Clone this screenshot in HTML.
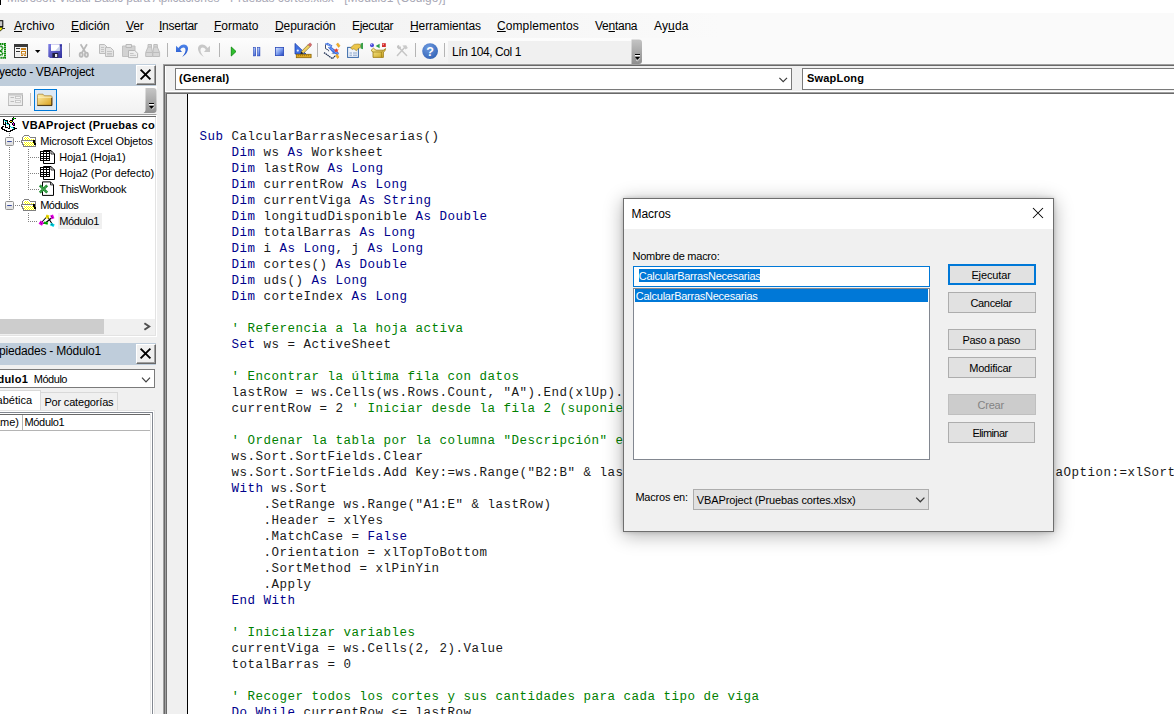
<!DOCTYPE html>
<html><head><meta charset="utf-8">
<style>
*{box-sizing:border-box;margin:0;padding:0}
html,body{width:1174px;height:714px;overflow:hidden;background:#fff}
body{font-family:"Liberation Sans",sans-serif;font-size:12px;color:#000;position:relative}
.abs{position:absolute}
.t{position:absolute;white-space:pre;line-height:1}
u{text-decoration:underline;text-underline-offset:1px}
/* title */
#title{left:0;top:0;width:1174px;height:13px;background:#fff;overflow:hidden}
#menubar{left:0;top:13px;width:1174px;height:25px;background:linear-gradient(to right,#f0f0f0 0,#f3f3f3 300px,#fafafa 720px,#fafafa)}
#toolbar{left:0;top:38px;width:1174px;height:26px;background:#fafafa}
#mdi{left:0;top:64px;width:1174px;height:650px;background:#f0f0f0}
.mi{position:absolute;top:19px;font-size:12px;line-height:14px;white-space:pre;color:#000}
/* code */
#code{left:188px;top:94px;width:986px;height:620px;background:#fff;overflow:hidden}
#code pre{position:absolute;left:11.4px;top:35.4px;font-family:"Liberation Mono",monospace;font-size:12.5px;letter-spacing:0.5px;line-height:16px;color:#1a1a1a;white-space:pre}
.k{color:#00008b}.c{color:#008000}
</style></head><body>
<div id="title" class="abs"></div>
<div id="menubar" class="abs"></div>
<div id="toolbar" class="abs"></div>
<div id="mdi" class="abs"></div>
<div class="t" style="left:0;top:-9.5px;left:7px;font-size:12px;color:#a9a9b6;line-height:14px;letter-spacing:-0.05px">Microsoft Visual Basic para Aplicaciones - Pruebas cortes.xlsx - [Módulo1 (Código)]</div>
<div class="abs" style="left:0;top:0;width:1px;height:5px;background:#000"></div>
<div class="mi" style="left:14px;letter-spacing:0.06px"><u>A</u>rchivo</div>
<div class="mi" style="left:71px;letter-spacing:-0.11px"><u>E</u>dición</div>
<div class="mi" style="left:126px;letter-spacing:-0.2px"><u>V</u>er</div>
<div class="mi" style="left:159px;letter-spacing:-0.26px"><u>I</u>nsertar</div>
<div class="mi" style="left:214px;letter-spacing:-0.04px"><u>F</u>ormato</div>
<div class="mi" style="left:275px;letter-spacing:-0.08px"><u>D</u>epuración</div>
<div class="mi" style="left:352px;letter-spacing:-0.35px">Ejecu<u>t</u>ar</div>
<div class="mi" style="left:410px;letter-spacing:-0.09px"><u>H</u>erramientas</div>
<div class="mi" style="left:497px;letter-spacing:0.09px"><u>C</u>omplementos</div>
<div class="mi" style="left:595px;letter-spacing:-0.26px">Ve<u>n</u>tana</div>
<div class="mi" style="left:654px;letter-spacing:0.14px">Ay<u>u</u>da</div>
<!--MENU-->
<div class="abs" style="left:0;top:38px;width:632px;height:26px;background:linear-gradient(#fdfdfd,#f9f9f9 40%,#f2f2f2)"></div>
<svg class="abs" style="left:0;top:18px" width="8" height="16" viewBox="0 18 8 16"><rect x="-2" y="20.7" width="4.8" height="6" fill="#c8c8c8" stroke="#000" stroke-width="1"/><path d="M-1 27.2 L2.4 27.2 L2.4 29 L0.6 30.8 L-1 30.8 Z" fill="#f4ee00" stroke="#000" stroke-width="0.8"/><path d="M3 28.5 H5" stroke="#000" stroke-width="0.8"/></svg>
<svg class="abs" style="left:0;top:38px" width="660" height="28" viewBox="0 38 660 28">
<defs>
<linearGradient id="gSave" x1="0" y1="0" x2="1" y2="1"><stop offset="0" stop-color="#7f7fe6"/><stop offset="1" stop-color="#2e2e9a"/></linearGradient>
<linearGradient id="gStop" x1="0" y1="0" x2="1" y2="1"><stop offset="0" stop-color="#dfe9ff"/><stop offset="0.5" stop-color="#7fa0ee"/><stop offset="1" stop-color="#1d3fbf"/></linearGradient>
<linearGradient id="gGrip" x1="0" y1="0" x2="0" y2="1"><stop offset="0" stop-color="#c4c4c4"/><stop offset="1" stop-color="#8e8e8e"/></linearGradient>
<linearGradient id="gBox" x1="0" y1="0" x2="1" y2="1"><stop offset="0" stop-color="#fff3a0"/><stop offset="1" stop-color="#c9a21a"/></linearGradient>
<radialGradient id="gHelp" cx="0.4" cy="0.3" r="0.8"><stop offset="0" stop-color="#6f9be0"/><stop offset="1" stop-color="#2f5fb3"/></radialGradient>
</defs>
<!-- excel icon partial -->
<rect x="-6" y="43.9" width="11" height="13.9" fill="#fff" stroke="#0a8a0a" stroke-width="2" stroke-dasharray="1.5 0.5"/>
<path d="M-1 46.6 Q2.6 45.6 2.6 48 Q2.6 50 -0.6 51.4 M-1 51 Q2.8 51.6 2.8 54.6 L-1 55" stroke="#0a8a0a" stroke-width="1.7" fill="none" stroke-dasharray="1.5 0.4"/>
<!-- userform -->
<rect x="14.5" y="44.5" width="13" height="13" fill="#f4f4f4" stroke="#3a3a3a" stroke-width="1"/>
<rect x="14" y="44" width="14" height="3" fill="#3a3a3a"/>
<rect x="16" y="48" width="4" height="1" fill="#333"/><rect x="16" y="51" width="4" height="1" fill="#333"/><rect x="16" y="53" width="4" height="3" fill="#ececec"/>
<rect x="21" y="48" width="5" height="2" fill="#c8801a"/>
<rect x="21.5" y="51.5" width="4" height="2.5" fill="#fff" stroke="#c8801a" stroke-width="1"/>
<rect x="21" y="55" width="2" height="1" fill="#c8801a"/><rect x="24" y="55" width="2" height="1" fill="#c8801a"/>
<path d="M35 50 H40.4 L37.7 53 Z" fill="#000"/>
<!-- save -->
<path d="M48.3 44 H62 V58 H50 L48.3 56.3 Z" fill="url(#gSave)"/>
<rect x="51" y="44.3" width="8.6" height="6.6" fill="#fff"/>
<path d="M55 51 L59.6 46 V51 Z" fill="#c9d3ea"/>
<rect x="52.4" y="53" width="5.8" height="4.6" fill="#1e1e3a"/>
<rect x="55" y="54" width="2.2" height="3" fill="#e8e8f4"/>
<rect x="60.4" y="45" width="1" height="1.4" fill="#1e1e6a"/>
<!-- separators -->
<g stroke="#b4b4b4" stroke-width="1"><path d="M69.5 43V57M167.5 43V57M219.5 43V57M317.5 43V57M415.5 43V57M444.5 43V57"/></g>
<!-- scissors (disabled) -->
<g stroke="#b8b8b8" stroke-width="1.7" fill="none"><path d="M80.6 44.2 L85.8 53 M87 44.2 L81.8 53"/><ellipse cx="81.2" cy="54.8" rx="1.6" ry="2.1" fill="#e4e4e4"/><ellipse cx="86.4" cy="54.8" rx="1.6" ry="2.1" fill="#e4e4e4"/></g>
<!-- copy (disabled) -->
<g stroke="#bcbcbc" stroke-width="1" fill="#e4e4e4"><path d="M99.5 44.5 H104.5 L107.5 47.5 V53.5 H99.5 Z"/><path d="M105.5 47.5 H110.5 L113.5 50.5 V56.5 H105.5 Z"/></g>
<g stroke="#c4c4c4" stroke-width="1"><path d="M101 47.5H104M101 49.5H104M101 51.5H104M107 51.5H112M107 53.5H112M107 54.9H112"/></g>
<!-- paste (disabled) -->
<path d="M122.5 46 H135 V56.5 H122.5 Z" fill="#d2d2d2" stroke="#c0c0c0"/>
<path d="M126 44.5 H131.5 V47.5 H126 Z" fill="#e0e0e0" stroke="#b8b8b8"/>
<path d="M128.5 50.5 H134.8 L137.6 53.3 V57.6 H128.5 Z" fill="#ededed" stroke="#b6b6b6"/>
<path d="M130 53.5H133.6M130 55.4H136" stroke="#c4c4c4"/>
<!-- binoculars (disabled) -->
<g fill="#d6d6d6" stroke="#bdbdbd" stroke-width="1"><path d="M148 44.5 H151.5 V47 L152.5 52.5 V56.5 H145.7 V52.5 L148 47 Z"/><path d="M153.8 44.5 H157.3 V47 L159.6 52.5 V56.5 H152.8 V52.5 L153.8 47 Z"/></g>
<path d="M146 52.5H152.5M153 52.5H159.5M148 47H151.5M154 47H157.3" stroke="#bdbdbd"/>
<!-- undo -->
<defs><linearGradient id="gUndo" x1="0" y1="0" x2="0" y2="1"><stop offset="0" stop-color="#4f86ea"/><stop offset="1" stop-color="#1f50c8"/></linearGradient></defs>
<path d="M176 45.8 L176 51.9 L182 51.9 L180.2 49.8 C181.6 47.6 184 46.8 185.2 48.6 C186.2 50.6 185 53.6 182.2 56.9 C186 54.8 188.6 50.6 187.9 47.4 C186.8 43.4 181.4 43.2 178.4 47.9 Z" fill="url(#gUndo)"/>
<!-- redo disabled -->
<path d="M 210 45.8 L 210 51.9 L 204 51.9 L 205.8 49.8 C 204.4 47.6 202 46.8 200.8 48.6 C 199.8 50.6 201 53.6 203.8 56.9 C 200 54.8 197.4 50.6 198.1 47.4 C 199.2 43.4 204.6 43.2 207.6 47.9 Z" fill="#c8c8c8"/>
<!-- play -->
<path d="M231.3 47 L236 51.5 L231.3 56 Z" fill="#2fc02f" stroke="#0f8a0f" stroke-width="0.9" stroke-linejoin="round"/>
<!-- pause -->
<rect x="253.3" y="47.3" width="2.4" height="8.6" fill="url(#gStop)" stroke="#2a49b8" stroke-width="0.6"/>
<rect x="257.5" y="47.3" width="2.4" height="8.6" fill="url(#gStop)" stroke="#2a49b8" stroke-width="0.6"/>
<!-- stop -->
<rect x="275.4" y="47.4" width="8.2" height="8.2" fill="url(#gStop)" stroke="#2a49b8" stroke-width="0.8"/>
<!-- design mode -->
<path d="M295 43.4 L295 54 L306 54 Z" fill="#3f6fe0" stroke="#1e44b0" stroke-width="0.8"/>
<circle cx="297.8" cy="50.6" r="1.1" fill="#e8eeff"/>
<path d="M301.2 51.6 L308.2 44.6 L310.2 46.6 L303.2 53.6 Z" fill="#f0d060" stroke="#6a5a20" stroke-width="0.6"/>
<path d="M308.2 44.6 L309.4 43.4 Q310.6 42.8 311.2 43.8 Q311.8 44.8 311.2 45.6 L310.2 46.6 Z" fill="#d86a6a" stroke="#a84848" stroke-width="0.5"/>
<path d="M301.2 51.6 L303.2 53.6 L300.2 54.4 Z" fill="#222"/>
<rect x="296.3" y="54.3" width="14.8" height="3.4" fill="#e0a820" stroke="#8a6408" stroke-width="0.8"/>
<path d="M298.5 54.5v1.6M300.5 54.5v1.6M302.5 54.5v1.6M304.5 54.5v1.6M306.5 54.5v1.6M308.5 54.5v1.6" stroke="#8a6408" stroke-width="0.6"/>
<!-- project explorer -->
<path d="M325.5 44.4 V48.6 L328.6 50.2 V52.8 L332.8 54.4 L333.6 51.6" fill="#fff" stroke="#2a3a5a" stroke-width="0.9"/>
<path d="M324.2 52.4 L327.8 50.8 L335 55.6 L332.4 58.2 Z" fill="#f6f8fc"/>
<path d="M324 52.6 L332.4 58.6 L335.2 55.8" fill="none" stroke="#2a3a5a" stroke-width="1.3" stroke-dasharray="1.6 0.5"/>
<path d="M325 43.5 L327.6 42.8 L332.4 45.4 L331.6 46.9 L326 44.8 Z" fill="#3f72e4"/>
<path d="M327.8 47.2 L330.8 46.5 L339 53 L338 55 L333.6 53.4 Z" fill="#3f72e4"/>
<path d="M326.4 43.8 L331.2 46 M329.4 47.4 L337.4 53.4" stroke="#dfe9ff" stroke-width="0.7" stroke-dasharray="1 0.8"/>
<path d="M336.4 44.4 L337.8 42.9 L340 45.8 L338.6 47.4 Z M335.6 55.6 L337 54 L339 57 L337.6 58.6 Z" fill="#f5b020" stroke="#d08a10" stroke-width="0.5"/>
<path d="M336.3 48.2 L337.2 49.4 L338.8 49.6 L337.6 50.8 L337.8 52.2 L336.3 51.6 L334.8 52.2 L335 50.8 L333.8 49.6 L335.4 49.4 Z" fill="#e8402a"/>
<!-- properties -->
<rect x="347.6" y="47.4" width="10.8" height="10" fill="#eef3fb" stroke="#3a6aa8" stroke-width="1"/>
<path d="M349.5 53H352M353 53H357M349.5 55.2H352M353 55.2H357" stroke="#8aa4c8" stroke-width="1"/>
<path d="M350.6 47.8 L354.2 44.4 L358 44 Q360.8 43.8 361 46 Q360.6 48.2 358 48.6 L356.4 50.8 L354 48.8 L352 49.4 Z" fill="#ecc64a" stroke="#9a7a18" stroke-width="0.6"/>
<path d="M360.6 43.6 L363 42.8 V49.2 L360.6 48.4 Z" fill="#3aa04a"/>
<!-- object browser -->
<circle cx="372" cy="45.2" r="2" fill="#4a4ad8"/><circle cx="371.5" cy="44.6" r="0.7" fill="#c8c8ff"/>
<path d="M375.6 46 L379.6 43.8 V48.2 Z" fill="#2aa04a"/>
<rect x="382" y="43.2" width="3.8" height="3.8" fill="#d02a2a"/><rect x="382.6" y="43.8" width="1.4" height="1.4" fill="#ff9a9a"/>
<path d="M371 50.4 L373.4 48.2 L376 50.2 L383.4 50.2 L385.6 48.6 L385 50.8 L383.4 52 V57.4 H373 V52 Z" fill="url(#gBox)" stroke="#9a7810" stroke-width="0.8"/>
<path d="M373 52 H381.4 V57.4 M381.4 52 L383.4 50.4" fill="none" stroke="#9a7810" stroke-width="0.7"/>
<!-- toolbox disabled -->
<g stroke="#c6c6c6" stroke-width="1.5" stroke-linecap="round" fill="none"><path d="M397.4 55.4 L404.6 47.6"/><path d="M406.6 55.4 L399.4 48"/></g>
<path d="M402.4 45.6 L406.2 45.2 L407.8 48 L405.6 49.6 Z" fill="#cacaca"/>
<path d="M397 47.6 Q396.6 45.2 399 45 L399.6 46.8 L401 46.4 L400.8 48.6 L398.6 49.2 Z" fill="#c4c4c4"/>
<!-- help -->
<circle cx="430.1" cy="51.1" r="7.9" fill="url(#gHelp)"/>
<text x="430.1" y="55.6" font-family="Liberation Sans" font-weight="bold" font-size="12.5" fill="#fff" text-anchor="middle">?</text>
<!-- status field -->
<rect x="448" y="41" width="183.5" height="22.4" fill="#f0f0f0"/>
<!-- grip -->
<path d="M631.5 39.5 H639 Q642 39.5 642 42.5 V61 Q642 64 639 64 H631.5 Z" fill="url(#gGrip)"/>
<rect x="635" y="54" width="5" height="1" fill="#000"/><rect x="635" y="55" width="5" height="1" fill="#fff"/>
<path d="M635 57 H640 L637.5 59.8 Z" fill="#000"/><path d="M636 60 L637.5 61 L640 58" stroke="#fff" stroke-width="0.6" fill="none"/>
</svg>
<div class="t" style="left:452px;top:44.5px;font-size:12px;line-height:14px;letter-spacing:-0.41px">Lín 104, Col 1</div>
<!--TOOLBAR-->
<div class="abs" style="left:0;top:64px;width:157px;height:650px;background:#f0f0f0"></div>
<!-- project title -->
<div class="abs" style="left:0;top:64px;width:156px;height:22px;background:#bfcddb;overflow:hidden"><div class="t" style="right:62px;top:0.5px;font-size:12px;line-height:14px;letter-spacing:-0.32px">Proyecto - VBAProject</div></div>
<div class="abs" style="left:136px;top:65px;width:20px;height:20px;background:#f0f0f0;border-top:1px solid #fff;border-left:1px solid #fff;border-right:1px solid #696969;border-bottom:1px solid #696969;box-shadow:inset -1px -1px 0 #a0a0a0"></div>
<svg class="abs" style="left:136px;top:65px" width="20" height="20"><path d="M4.6 4.6 L14.4 14.4 M14.4 4.6 L4.6 14.4" stroke="#000" stroke-width="1.9"/></svg>
<!-- project toolbar -->
<div class="abs" style="left:0;top:86px;width:157px;height:28px;background:linear-gradient(#fdfdfd,#f1f1f1)"></div>
<svg class="abs" style="left:0;top:86px" width="157" height="28" viewBox="0 86 157 28">
<defs><linearGradient id="gFold" x1="0" y1="0" x2="1" y2="1"><stop offset="0" stop-color="#fff0b0"/><stop offset="1" stop-color="#d89e18"/></linearGradient>
<linearGradient id="gGrip2" x1="0" y1="0" x2="0" y2="1"><stop offset="0" stop-color="#c6c6c6"/><stop offset="1" stop-color="#909090"/></linearGradient></defs>
<rect x="8.5" y="93.5" width="14" height="12" fill="#ececec" stroke="#c2c2c2"/><rect x="8" y="93" width="15" height="2.6" fill="#c8c8c8"/><path d="M8.5 105.5 H22.5 V95" fill="none" stroke="#b4b4b4"/>
<path d="M10.5 97.5H14M10.5 101.5H14" stroke="#bdbdbd"/><rect x="15.5" y="96.5" width="5" height="2" fill="#f4f4f4" stroke="#c2c2c2" stroke-width="0.8"/><rect x="15.5" y="100.5" width="5" height="2" fill="#f4f4f4" stroke="#c2c2c2" stroke-width="0.8"/>
<path d="M30.5 93V106" stroke="#c0c0c0"/>
<rect x="34.5" y="89.5" width="22" height="21" fill="#dde9f5" stroke="#0078d7" stroke-width="1.2" shape-rendering="crispEdges"/>
<path d="M37.5 95.2 Q37.5 94.2 38.5 94.2 H43 L44.4 95.8 H51 Q52 95.8 52 96.8 V105.6 H37.5 Z" fill="url(#gFold)" stroke="#a07828" stroke-width="0.7"/><path d="M37.4 105.4 H52 M51.8 97.5 V105.4" stroke="#3a2810" stroke-width="0.9" fill="none"/>
<path d="M37.8 97.2 H51.8" stroke="#fff6cc" stroke-width="0.8"/>
<path d="M145.5 88 H153.5 Q156.5 88 156.5 91 V110 Q156.5 113 153.5 113 H143.5 Q145.5 112 145.5 110 Z" fill="url(#gGrip2)"/>
<rect x="149" y="103" width="5" height="1" fill="#000"/><rect x="149" y="104" width="5" height="1" fill="#fff"/>
<path d="M149 106 H154 L151.5 108.8 Z" fill="#000"/><path d="M152 109.4 L154.6 106.6" stroke="#fff" stroke-width="0.7"/>
</svg>
<!-- tree -->
<div class="abs" style="left:-2px;top:114px;width:159px;height:223px;background:#fff;border-top:1px solid #a0a0a0;border-right:1px solid #fff;border-bottom:1px solid #fff;box-shadow:inset 0 1px 0 #fafafa, inset 0 2px 0 #696969, inset -1px 0 0 #e3e3e3, inset 0 -1px 0 #e3e3e3"></div>
<div class="abs" style="left:58px;top:213px;width:44px;height:16px;background:#f0f0f0"></div>
<div class="abs" style="left:0;top:116px;width:155px;height:120px;overflow:hidden;font-size:11px">
<div class="t" style="left:22px;top:2.5px;font-weight:bold;line-height:13px;letter-spacing:0.29px">VBAProject (Pruebas cortes.xlsx)</div>
<div class="t" style="left:40.2px;top:18.5px;line-height:13px;letter-spacing:-0.14px">Microsoft Excel Objetos</div>
<div class="t" style="left:59.2px;top:34.5px;line-height:13px;letter-spacing:-0.12px">Hoja1 (Hoja1)</div>
<div class="t" style="left:59.2px;top:50.5px;line-height:13px;letter-spacing:-0.02px">Hoja2 (Por defecto)</div>
<div class="t" style="left:59.2px;top:66.5px;line-height:13px;letter-spacing:-0.26px">ThisWorkbook</div>
<div class="t" style="left:40.2px;top:82.5px;line-height:13px;letter-spacing:-0.5px">Módulos</div>
<div class="t" style="left:59.2px;top:98.5px;line-height:13px;letter-spacing:-0.34px">Módulo1</div>
</div>
<svg class="abs" style="left:0;top:116px" width="157" height="120" viewBox="0 116 157 120">
<g stroke="#808080" stroke-width="1" stroke-dasharray="1 1" fill="none">
<path d="M9.5 133 V137 M9.5 147 V201 M15 141.5 H21 M15 205.5 H21"/>
<path d="M28.5 149 V190 M30 157.5 H40 M30 173.5 H40 M30 189.5 H39 M28.5 213 V222 M30 221.5 H38"/>
</g>
<!-- vbaproject icon -->
<g shape-rendering="crispEdges"><rect x="13" y="117" width="1" height="1" fill="#000"/><rect x="12" y="118" width="1" height="1" fill="#000"/><rect x="13" y="118" width="2" height="1" fill="#00d800"/><rect x="15" y="118" width="1" height="1" fill="#000"/><rect x="3" y="119" width="2" height="1" fill="#000"/><rect x="12" y="119" width="2" height="1" fill="#000"/><rect x="3" y="120" width="1" height="1" fill="#000"/><rect x="4" y="120" width="1" height="1" fill="#00e8e8"/><rect x="5" y="120" width="3" height="1" fill="#000"/><rect x="10" y="120" width="3" height="1" fill="#000"/><rect x="3" y="121" width="1" height="1" fill="#000"/><rect x="5" y="121" width="2" height="1" fill="#00e8e8"/><rect x="7" y="121" width="1" height="1" fill="#000"/><rect x="9" y="121" width="1" height="1" fill="#000"/><rect x="10" y="121" width="2" height="1" fill="#f0e800"/><rect x="12" y="121" width="1" height="1" fill="#000"/><rect x="3" y="122" width="1" height="1" fill="#000"/><rect x="5" y="122" width="1" height="1" fill="#000"/><rect x="7" y="122" width="1" height="1" fill="#000"/><rect x="10" y="122" width="2" height="1" fill="#000"/><rect x="13" y="122" width="1" height="1" fill="#000"/><rect x="3" y="123" width="1" height="1" fill="#000"/><rect x="5" y="123" width="1" height="1" fill="#000"/><rect x="6" y="123" width="1" height="1" fill="#00e8e8"/><rect x="7" y="123" width="2" height="1" fill="#000"/><rect x="12" y="123" width="1" height="1" fill="#000"/><rect x="13" y="123" width="1" height="1" fill="#f000f0"/><rect x="14" y="123" width="1" height="1" fill="#000"/><rect x="3" y="124" width="3" height="1" fill="#000"/><rect x="7" y="124" width="2" height="1" fill="#00e8e8"/><rect x="9" y="124" width="1" height="1" fill="#000"/><rect x="12" y="124" width="1" height="1" fill="#000"/><rect x="13" y="124" width="1" height="1" fill="#f000f0"/><rect x="14" y="124" width="1" height="1" fill="#000"/><rect x="5" y="125" width="1" height="1" fill="#000"/><rect x="9" y="125" width="1" height="1" fill="#000"/><rect x="13" y="125" width="2" height="1" fill="#000"/><rect x="2" y="126" width="2" height="1" fill="#000"/><rect x="5" y="126" width="1" height="1" fill="#000"/><rect x="9" y="126" width="1" height="1" fill="#000"/><rect x="10" y="126" width="1" height="1" fill="#00e8e8"/><rect x="1" y="127" width="2" height="1" fill="#000"/><rect x="5" y="127" width="3" height="1" fill="#000"/><rect x="9" y="127" width="1" height="1" fill="#000"/><rect x="11" y="127" width="2" height="1" fill="#00e8e8"/><rect x="13" y="127" width="2" height="1" fill="#000"/><rect x="1" y="128" width="2" height="1" fill="#000"/><rect x="8" y="128" width="2" height="1" fill="#000"/><rect x="13" y="128" width="1" height="1" fill="#00e8e8"/><rect x="14" y="128" width="3" height="1" fill="#000"/><rect x="2" y="129" width="3" height="1" fill="#000"/><rect x="12" y="129" width="3" height="1" fill="#000"/><rect x="4" y="130" width="3" height="1" fill="#000"/><rect x="10" y="130" width="3" height="1" fill="#000"/><rect x="6" y="131" width="5" height="1" fill="#000"/></g>
<g transform="translate(0,0)"><rect x="5.5" y="137.5" width="8" height="8" rx="1" fill="#f4f4f4" stroke="#919191"/><rect x="6.2" y="141.6" width="6.6" height="3.3" fill="#e0e0e0"/><path d="M7.2 141.5H11.8" stroke="#3c4ea0" stroke-width="1"/></g><g transform="translate(0,64)"><rect x="5.5" y="137.5" width="8" height="8" rx="1" fill="#f4f4f4" stroke="#919191"/><rect x="6.2" y="141.6" width="6.6" height="3.3" fill="#e0e0e0"/><path d="M7.2 141.5H11.8" stroke="#3c4ea0" stroke-width="1"/></g><g shape-rendering="crispEdges"><rect x="24" y="135" width="5" height="1" fill="#808080"/><rect x="23" y="136" width="1" height="1" fill="#808080"/><rect x="24" y="136" width="5" height="1" fill="#ffffff"/><rect x="29" y="136" width="1" height="1" fill="#808080"/><rect x="22" y="137" width="1" height="1" fill="#808080"/><rect x="23" y="137" width="1" height="1" fill="#ffffff"/><rect x="24" y="137" width="1" height="1" fill="#ffffff"/><rect x="25" y="137" width="1" height="1" fill="#ffff00"/><rect x="26" y="137" width="1" height="1" fill="#ffffff"/><rect x="27" y="137" width="1" height="1" fill="#ffff00"/><rect x="28" y="137" width="1" height="1" fill="#ffffff"/><rect x="29" y="137" width="1" height="1" fill="#ffffff"/><rect x="30" y="137" width="6" height="1" fill="#808080"/><rect x="22" y="138" width="1" height="1" fill="#808080"/><rect x="23" y="138" width="1" height="1" fill="#ffffff"/><rect x="24" y="138" width="1" height="1" fill="#ffff00"/><rect x="25" y="138" width="1" height="1" fill="#ffffff"/><rect x="26" y="138" width="1" height="1" fill="#ffff00"/><rect x="27" y="138" width="1" height="1" fill="#ffffff"/><rect x="28" y="138" width="1" height="1" fill="#ffff00"/><rect x="29" y="138" width="1" height="1" fill="#ffffff"/><rect x="30" y="138" width="5" height="1" fill="#ffffff"/><rect x="35" y="138" width="1" height="1" fill="#808080"/><rect x="22" y="139" width="1" height="1" fill="#808080"/><rect x="23" y="139" width="1" height="1" fill="#ffffff"/><rect x="24" y="139" width="1" height="1" fill="#ffffff"/><rect x="25" y="139" width="1" height="1" fill="#ffff00"/><rect x="26" y="139" width="1" height="1" fill="#ffffff"/><rect x="27" y="139" width="1" height="1" fill="#ffff00"/><rect x="28" y="139" width="1" height="1" fill="#ffffff"/><rect x="29" y="139" width="1" height="1" fill="#ffff00"/><rect x="30" y="139" width="1" height="1" fill="#ffffff"/><rect x="31" y="139" width="1" height="1" fill="#ffff00"/><rect x="32" y="139" width="1" height="1" fill="#ffffff"/><rect x="33" y="139" width="1" height="1" fill="#ffff00"/><rect x="34" y="139" width="1" height="1" fill="#ffffff"/><rect x="35" y="139" width="1" height="1" fill="#808080"/><rect x="21" y="140" width="12" height="1" fill="#808080"/><rect x="33" y="140" width="2" height="1" fill="#000000"/><rect x="35" y="140" width="1" height="1" fill="#808080"/><rect x="21" y="141" width="1" height="1" fill="#808080"/><rect x="22" y="141" width="11" height="1" fill="#ffffff"/><rect x="33" y="141" width="2" height="1" fill="#000000"/><rect x="35" y="141" width="1" height="1" fill="#808080"/><rect x="21" y="142" width="2" height="1" fill="#808080"/><rect x="23" y="142" width="1" height="1" fill="#ffffff"/><rect x="24" y="142" width="1" height="1" fill="#ffff00"/><rect x="25" y="142" width="1" height="1" fill="#ffffff"/><rect x="26" y="142" width="1" height="1" fill="#ffff00"/><rect x="27" y="142" width="1" height="1" fill="#ffffff"/><rect x="28" y="142" width="1" height="1" fill="#ffff00"/><rect x="29" y="142" width="1" height="1" fill="#ffffff"/><rect x="30" y="142" width="1" height="1" fill="#ffff00"/><rect x="31" y="142" width="1" height="1" fill="#ffffff"/><rect x="32" y="142" width="1" height="1" fill="#ffff00"/><rect x="33" y="142" width="2" height="1" fill="#000000"/><rect x="35" y="142" width="1" height="1" fill="#808080"/><rect x="22" y="143" width="1" height="1" fill="#808080"/><rect x="23" y="143" width="1" height="1" fill="#ffffff"/><rect x="24" y="143" width="1" height="1" fill="#ffffff"/><rect x="25" y="143" width="1" height="1" fill="#ffff00"/><rect x="26" y="143" width="1" height="1" fill="#ffffff"/><rect x="27" y="143" width="1" height="1" fill="#ffff00"/><rect x="28" y="143" width="1" height="1" fill="#ffffff"/><rect x="29" y="143" width="1" height="1" fill="#ffff00"/><rect x="30" y="143" width="1" height="1" fill="#ffffff"/><rect x="31" y="143" width="1" height="1" fill="#ffff00"/><rect x="32" y="143" width="1" height="1" fill="#ffffff"/><rect x="33" y="143" width="1" height="1" fill="#ffff00"/><rect x="34" y="143" width="2" height="1" fill="#000000"/><rect x="22" y="144" width="2" height="1" fill="#808080"/><rect x="24" y="144" width="1" height="1" fill="#ffff00"/><rect x="25" y="144" width="1" height="1" fill="#ffffff"/><rect x="26" y="144" width="1" height="1" fill="#ffff00"/><rect x="27" y="144" width="1" height="1" fill="#ffffff"/><rect x="28" y="144" width="1" height="1" fill="#ffff00"/><rect x="29" y="144" width="1" height="1" fill="#ffffff"/><rect x="30" y="144" width="1" height="1" fill="#ffff00"/><rect x="31" y="144" width="1" height="1" fill="#ffffff"/><rect x="32" y="144" width="1" height="1" fill="#ffff00"/><rect x="33" y="144" width="1" height="1" fill="#ffffff"/><rect x="34" y="144" width="2" height="1" fill="#000000"/><rect x="23" y="145" width="1" height="1" fill="#808080"/><rect x="24" y="145" width="1" height="1" fill="#ffffff"/><rect x="25" y="145" width="1" height="1" fill="#ffff00"/><rect x="26" y="145" width="1" height="1" fill="#ffffff"/><rect x="27" y="145" width="1" height="1" fill="#ffff00"/><rect x="28" y="145" width="1" height="1" fill="#ffffff"/><rect x="29" y="145" width="1" height="1" fill="#ffff00"/><rect x="30" y="145" width="1" height="1" fill="#ffffff"/><rect x="31" y="145" width="1" height="1" fill="#ffff00"/><rect x="32" y="145" width="1" height="1" fill="#ffffff"/><rect x="33" y="145" width="1" height="1" fill="#ffff00"/><rect x="34" y="145" width="1" height="1" fill="#ffffff"/><rect x="35" y="145" width="1" height="1" fill="#808080"/><rect x="23" y="146" width="13" height="1" fill="#808080"/></g><g shape-rendering="crispEdges"><rect x="24" y="199" width="5" height="1" fill="#808080"/><rect x="23" y="200" width="1" height="1" fill="#808080"/><rect x="24" y="200" width="5" height="1" fill="#ffffff"/><rect x="29" y="200" width="1" height="1" fill="#808080"/><rect x="22" y="201" width="1" height="1" fill="#808080"/><rect x="23" y="201" width="1" height="1" fill="#ffffff"/><rect x="24" y="201" width="1" height="1" fill="#ffffff"/><rect x="25" y="201" width="1" height="1" fill="#ffff00"/><rect x="26" y="201" width="1" height="1" fill="#ffffff"/><rect x="27" y="201" width="1" height="1" fill="#ffff00"/><rect x="28" y="201" width="1" height="1" fill="#ffffff"/><rect x="29" y="201" width="1" height="1" fill="#ffffff"/><rect x="30" y="201" width="6" height="1" fill="#808080"/><rect x="22" y="202" width="1" height="1" fill="#808080"/><rect x="23" y="202" width="1" height="1" fill="#ffffff"/><rect x="24" y="202" width="1" height="1" fill="#ffff00"/><rect x="25" y="202" width="1" height="1" fill="#ffffff"/><rect x="26" y="202" width="1" height="1" fill="#ffff00"/><rect x="27" y="202" width="1" height="1" fill="#ffffff"/><rect x="28" y="202" width="1" height="1" fill="#ffff00"/><rect x="29" y="202" width="1" height="1" fill="#ffffff"/><rect x="30" y="202" width="5" height="1" fill="#ffffff"/><rect x="35" y="202" width="1" height="1" fill="#808080"/><rect x="22" y="203" width="1" height="1" fill="#808080"/><rect x="23" y="203" width="1" height="1" fill="#ffffff"/><rect x="24" y="203" width="1" height="1" fill="#ffffff"/><rect x="25" y="203" width="1" height="1" fill="#ffff00"/><rect x="26" y="203" width="1" height="1" fill="#ffffff"/><rect x="27" y="203" width="1" height="1" fill="#ffff00"/><rect x="28" y="203" width="1" height="1" fill="#ffffff"/><rect x="29" y="203" width="1" height="1" fill="#ffff00"/><rect x="30" y="203" width="1" height="1" fill="#ffffff"/><rect x="31" y="203" width="1" height="1" fill="#ffff00"/><rect x="32" y="203" width="1" height="1" fill="#ffffff"/><rect x="33" y="203" width="1" height="1" fill="#ffff00"/><rect x="34" y="203" width="1" height="1" fill="#ffffff"/><rect x="35" y="203" width="1" height="1" fill="#808080"/><rect x="21" y="204" width="12" height="1" fill="#808080"/><rect x="33" y="204" width="2" height="1" fill="#000000"/><rect x="35" y="204" width="1" height="1" fill="#808080"/><rect x="21" y="205" width="1" height="1" fill="#808080"/><rect x="22" y="205" width="11" height="1" fill="#ffffff"/><rect x="33" y="205" width="2" height="1" fill="#000000"/><rect x="35" y="205" width="1" height="1" fill="#808080"/><rect x="21" y="206" width="2" height="1" fill="#808080"/><rect x="23" y="206" width="1" height="1" fill="#ffffff"/><rect x="24" y="206" width="1" height="1" fill="#ffff00"/><rect x="25" y="206" width="1" height="1" fill="#ffffff"/><rect x="26" y="206" width="1" height="1" fill="#ffff00"/><rect x="27" y="206" width="1" height="1" fill="#ffffff"/><rect x="28" y="206" width="1" height="1" fill="#ffff00"/><rect x="29" y="206" width="1" height="1" fill="#ffffff"/><rect x="30" y="206" width="1" height="1" fill="#ffff00"/><rect x="31" y="206" width="1" height="1" fill="#ffffff"/><rect x="32" y="206" width="1" height="1" fill="#ffff00"/><rect x="33" y="206" width="2" height="1" fill="#000000"/><rect x="35" y="206" width="1" height="1" fill="#808080"/><rect x="22" y="207" width="1" height="1" fill="#808080"/><rect x="23" y="207" width="1" height="1" fill="#ffffff"/><rect x="24" y="207" width="1" height="1" fill="#ffffff"/><rect x="25" y="207" width="1" height="1" fill="#ffff00"/><rect x="26" y="207" width="1" height="1" fill="#ffffff"/><rect x="27" y="207" width="1" height="1" fill="#ffff00"/><rect x="28" y="207" width="1" height="1" fill="#ffffff"/><rect x="29" y="207" width="1" height="1" fill="#ffff00"/><rect x="30" y="207" width="1" height="1" fill="#ffffff"/><rect x="31" y="207" width="1" height="1" fill="#ffff00"/><rect x="32" y="207" width="1" height="1" fill="#ffffff"/><rect x="33" y="207" width="1" height="1" fill="#ffff00"/><rect x="34" y="207" width="2" height="1" fill="#000000"/><rect x="22" y="208" width="2" height="1" fill="#808080"/><rect x="24" y="208" width="1" height="1" fill="#ffff00"/><rect x="25" y="208" width="1" height="1" fill="#ffffff"/><rect x="26" y="208" width="1" height="1" fill="#ffff00"/><rect x="27" y="208" width="1" height="1" fill="#ffffff"/><rect x="28" y="208" width="1" height="1" fill="#ffff00"/><rect x="29" y="208" width="1" height="1" fill="#ffffff"/><rect x="30" y="208" width="1" height="1" fill="#ffff00"/><rect x="31" y="208" width="1" height="1" fill="#ffffff"/><rect x="32" y="208" width="1" height="1" fill="#ffff00"/><rect x="33" y="208" width="1" height="1" fill="#ffffff"/><rect x="34" y="208" width="2" height="1" fill="#000000"/><rect x="23" y="209" width="1" height="1" fill="#808080"/><rect x="24" y="209" width="1" height="1" fill="#ffffff"/><rect x="25" y="209" width="1" height="1" fill="#ffff00"/><rect x="26" y="209" width="1" height="1" fill="#ffffff"/><rect x="27" y="209" width="1" height="1" fill="#ffff00"/><rect x="28" y="209" width="1" height="1" fill="#ffffff"/><rect x="29" y="209" width="1" height="1" fill="#ffff00"/><rect x="30" y="209" width="1" height="1" fill="#ffffff"/><rect x="31" y="209" width="1" height="1" fill="#ffff00"/><rect x="32" y="209" width="1" height="1" fill="#ffffff"/><rect x="33" y="209" width="1" height="1" fill="#ffff00"/><rect x="34" y="209" width="1" height="1" fill="#ffffff"/><rect x="35" y="209" width="1" height="1" fill="#808080"/><rect x="23" y="210" width="13" height="1" fill="#808080"/></g><g transform="translate(0,0)"><path d="M43.5 150.5 H51 L54.5 154 V163.5 H43.5 Z" fill="#fff" stroke="#000" stroke-width="1"/><path d="M51 150.5 V154 H54.5" fill="none" stroke="#000" stroke-width="0.8"/>
<g shape-rendering="crispEdges"><rect x="40" y="151" width="10" height="10" fill="#fff"/><path d="M40 151.5H50M40 153.5H50M40 156.5H50M40 158.5H50M40 160.5H50M40.5 151V161M43.5 151V161M46.5 151V161M49.5 151V161" stroke="#000" stroke-width="1"/></g></g><g transform="translate(0,16)"><path d="M43.5 150.5 H51 L54.5 154 V163.5 H43.5 Z" fill="#fff" stroke="#000" stroke-width="1"/><path d="M51 150.5 V154 H54.5" fill="none" stroke="#000" stroke-width="0.8"/>
<g shape-rendering="crispEdges"><rect x="40" y="151" width="10" height="10" fill="#fff"/><path d="M40 151.5H50M40 153.5H50M40 156.5H50M40 158.5H50M40 160.5H50M40.5 151V161M43.5 151V161M46.5 151V161M49.5 151V161" stroke="#000" stroke-width="1"/></g></g>
<!-- thisworkbook -->
<path d="M42.5 181.9 H50.5 L53.5 184.9 V195.4 H42.5 Z" fill="#fff" stroke="#000" stroke-width="1"/><path d="M50.5 181.9 V184.9 H53.5" fill="none" stroke="#000" stroke-width="0.8"/>
<path d="M39.8 185.4 L47.2 192.6 M47.2 185.4 L39.8 192.6" stroke="#1c8c2c" stroke-width="2.7"/>
<path d="M39.8 185.4 L47.2 192.6 M47.2 185.4 L39.8 192.6" stroke="#d8f0d8" stroke-width="0.7" stroke-dasharray="0.8 1.2"/>
<!-- module icon -->
<path d="M41.5 222.5 L47.5 216 M48 217.5 L52.5 224.5 M51.5 218 L46 222.5 M42 223.5 L45 223" stroke="#000" stroke-width="1.1" fill="none"/>
<rect x="46" y="214.8" width="3" height="3.8" fill="#f0e000" transform="rotate(20 47.5 216.6)"/>
<rect x="50.8" y="215" width="3" height="4" fill="#e000e0" transform="rotate(-20 52.2 217)"/>
<rect x="39.4" y="221.2" width="3.8" height="3.8" fill="#e000e0" transform="rotate(30 41.2 223)"/>
<rect x="44" y="222" width="4" height="2.4" fill="#00c000" transform="rotate(15 46 223)"/>
<rect x="50.4" y="223.4" width="4" height="2.8" fill="#00d8e8" transform="rotate(25 52.2 224.6)"/>
<path d="M46.6 216 L48.4 217.4 M51.4 216.4 L53 217.8 M40.2 222.4 L42.2 224 M44.6 223 L47.4 223.6 M51 224.2 L53.6 225.4" stroke="#000" stroke-width="0.6" stroke-dasharray="0.7 0.7"/>
</svg>
<!-- hscroll -->
<div class="abs" style="left:0;top:319px;width:155px;height:16px;background:#f0f0f0"></div>
<div class="abs" style="left:0;top:319px;width:104px;height:15px;background:#cdcdcd"></div>
<svg class="abs" style="left:142px;top:320px" width="10" height="12"><path d="M2.4 3.2 L7.2 6.5 L2.4 9.8" fill="none" stroke="#505050" stroke-width="2"/></svg>
<!-- props title -->
<div class="abs" style="left:0;top:343px;width:156px;height:22px;background:#bfcddb;overflow:hidden"><div class="t" style="right:55px;top:0.5px;font-size:12px;line-height:14px;letter-spacing:-0.19px">Propiedades - Módulo1</div></div>
<div class="abs" style="left:136px;top:344px;width:20px;height:20px;background:#f0f0f0;border-top:1px solid #fff;border-left:1px solid #fff;border-right:1px solid #696969;border-bottom:1px solid #696969;box-shadow:inset -1px -1px 0 #a0a0a0"></div>
<svg class="abs" style="left:136px;top:344px" width="20" height="20"><path d="M4.6 4.6 L14.4 14.4 M14.4 4.6 L4.6 14.4" stroke="#000" stroke-width="1.9"/></svg>
<!-- props combo -->
<div class="abs" style="left:-2px;top:369px;width:157px;height:19px;background:#fff;border:1px solid #7a7a7a"></div>
<div class="abs" style="left:0;top:370px;width:28px;height:17px;overflow:hidden"><div class="t" style="right:0px;top:3px;font-size:11px;line-height:13px;font-weight:bold;letter-spacing:0.25px">Módulo1</div></div><div class="t" style="left:33.8px;top:373px;font-size:11px;line-height:13px;letter-spacing:-0.48px">Módulo</div>
<svg class="abs" style="left:141px;top:376px" width="10" height="8"><path d="M1 1.6 L5 5.8 L9 1.6" fill="none" stroke="#404040" stroke-width="1.2"/></svg>
<!-- tabs -->
<div class="abs" style="left:40px;top:392px;width:78px;height:19px;background:#f0f0f0;border:1px solid #d9d9d9"></div>
<div class="abs" style="left:-2px;top:390px;width:43px;height:23px;background:#fff;border:1px solid #d9d9d9;border-bottom:none"></div>
<div class="abs" style="left:0;top:391px;width:40px;height:20px;overflow:hidden"><div class="t" style="right:8px;top:3.1px;font-size:11px;line-height:13px">Alfabética</div></div>
<div class="t" style="left:44.4px;top:396px;font-size:11px;line-height:13px;letter-spacing:-0.18px">Por categorías</div>
<!-- grid -->
<div class="abs" style="left:-2px;top:410px;width:157px;height:310px;background:#fff;border:1px solid #e4e4e4"></div>
<div class="abs" style="left:-2px;top:412px;width:155px;height:310px;background:#fff;border:1px solid #828790"></div>
<div class="abs" style="left:0;top:414px;width:150px;height:1px;background:#696969"></div>
<div class="abs" style="left:150px;top:414px;width:1px;height:300px;background:#e8e8e8"></div>
<div class="abs" style="left:22px;top:415px;width:1px;height:15px;background:#b4b4b4"></div>
<div class="abs" style="left:0;top:430px;width:150px;height:1px;background:#b4b4b4"></div>
<div class="abs" style="left:0;top:414px;width:22px;height:16px;overflow:hidden"><div class="t" style="right:3px;top:2.4px;font-size:11px;line-height:13px">(Name)</div></div>
<div class="t" style="left:24.5px;top:416.4px;font-size:11px;line-height:13px;letter-spacing:-0.34px">Módulo1</div>
<!--LEFT-->
<div class="abs" style="left:163px;top:64px;width:1011px;height:650px;background:#f0f0f0;border-left:1px solid #a0a0a0;border-top:1px solid #a0a0a0"></div>
<div class="abs" style="left:164px;top:65px;width:1010px;height:649px;background:#f0f0f0;border-left:1px solid #696969;border-top:1px solid #696969"></div>
<div class="abs" style="left:165px;top:66px;width:1px;height:26px;background:#fff"></div>
<div class="abs" style="left:165px;top:91px;width:1009px;height:1px;background:#fff"></div>
<div class="abs" style="left:175px;top:68px;width:617px;height:22px;background:#fff;border:1px solid #7a7a7a"></div>
<div class="t" style="left:179px;top:70.5px;font-size:11px;font-weight:bold;line-height:14px;letter-spacing:0.24px">(General)</div>
<svg class="abs" style="left:778px;top:76px" width="12" height="8" viewBox="0 0 12 8"><path d="M1.4 1.8 L5.2 5.6 L9 1.8" fill="none" stroke="#3a3a3a" stroke-width="1.15"/></svg>
<div class="abs" style="left:802px;top:68px;width:380px;height:22px;background:#fff;border:1px solid #7a7a7a"></div>
<div class="t" style="left:807px;top:70.7px;font-size:11px;font-weight:bold;line-height:14px;letter-spacing:0.2px">SwapLong</div>
<div class="abs" style="left:165px;top:92px;width:1009px;height:622px;background:#f0f0f0;border-left:1px solid #a0a0a0;border-top:1px solid #a0a0a0"></div>
<div class="abs" style="left:166px;top:93px;width:1008px;height:621px;background:#f0f0f0;border-left:1px solid #696969;border-top:1px solid #696969"></div>
<div class="abs" style="left:187px;top:94px;width:1px;height:620px;background:#000"></div>
<div id="code" class="abs"><pre><span class="k">Sub</span> CalcularBarrasNecesarias()
    <span class="k">Dim</span> ws <span class="k">As</span> Worksheet
    <span class="k">Dim</span> lastRow <span class="k">As Long</span>
    <span class="k">Dim</span> currentRow <span class="k">As Long</span>
    <span class="k">Dim</span> currentViga <span class="k">As String</span>
    <span class="k">Dim</span> longitudDisponible <span class="k">As Double</span>
    <span class="k">Dim</span> totalBarras <span class="k">As Long</span>
    <span class="k">Dim</span> i <span class="k">As Long</span>, j <span class="k">As Long</span>
    <span class="k">Dim</span> cortes() <span class="k">As Double</span>
    <span class="k">Dim</span> uds() <span class="k">As Long</span>
    <span class="k">Dim</span> corteIndex <span class="k">As Long</span>

    <span class="c">' Referencia a la hoja activa</span>
    <span class="k">Set</span> ws = ActiveSheet

    <span class="c">' Encontrar la última fila con datos</span>
    lastRow = ws.Cells(ws.Rows.Count, "A").End(xlUp).Row
    currentRow = 2 <span class="c">' Iniciar desde la fila 2 (suponiendo que la fila 1 es encabezado)</span>

    <span class="c">' Ordenar la tabla por la columna "Descripción" en orden ascendente</span>
    ws.Sort.SortFields.Clear
    ws.Sort.SortFields.Add Key:=ws.Range("B2:B" &amp; lastRow), SortOn:=xlSortOnValues, Order:=xlAscending, DataOption:=xlSortNormal
    <span class="k">With</span> ws.Sort
        .SetRange ws.Range("A1:E" &amp; lastRow)
        .Header = xlYes
        .MatchCase = <span class="k">False</span>
        .Orientation = xlTopToBottom
        .SortMethod = xlPinYin
        .Apply
    <span class="k">End With</span>

    <span class="c">' Inicializar variables</span>
    currentViga = ws.Cells(2, 2).Value
    totalBarras = 0

    <span class="c">' Recoger todos los cortes y sus cantidades para cada tipo de viga</span>
    <span class="k">Do While</span> currentRow &lt;= lastRow
</pre></div>
<!--CODEWIN-->
<div class="abs" style="left:623px;top:198px;width:431px;height:334px;background:#f0f0f0;border:1px solid #6e6e6e;box-shadow:0 3px 18px rgba(0,0,0,0.32),0 0 4px rgba(0,0,0,0.18)"></div>
<div class="abs" style="left:624px;top:199px;width:429px;height:30px;background:#fff"></div>
<div class="t" style="left:631.4px;top:206.6px;font-size:12px;line-height:14px;letter-spacing:0.02px">Macros</div>
<svg class="abs" style="left:1032px;top:207px" width="12" height="12"><path d="M1 1 L11 11 M11 1 L1 11" stroke="#000" stroke-width="1.05"/></svg>
<div class="t" style="left:632.5px;top:249.5px;font-size:11px;line-height:13px;letter-spacing:-0.26px">Nombre de macro:</div>
<div class="abs" style="left:633px;top:266px;width:297px;height:21px;background:#fff;border:1px solid #0078d7"></div>
<div class="abs" style="left:639px;top:269.4px;width:121px;height:12.6px;background:#0078d7"></div>
<div class="t" style="left:638.8px;top:269.8px;font-size:11px;line-height:13px;letter-spacing:-0.25px;color:#fff">CalcularBarrasNecesarias</div>
<div class="abs" style="left:633px;top:288px;width:297px;height:172px;background:#fff;border:1px solid #828790"></div>
<div class="abs" style="left:635px;top:289px;width:293px;height:13px;background:#0078d7"></div>
<div class="t" style="left:635.8px;top:289.7px;font-size:11px;line-height:13px;letter-spacing:-0.25px;color:#fff">CalcularBarrasNecesarias</div>
<div class="abs" style="left:948px;top:264px;width:88px;height:21px;background:#e1e1e1;border:2px solid #0078d7"></div><div class="t" style="left:971.4px;top:268.6px;font-size:11px;line-height:13px;letter-spacing:-0.11px;">Ejecutar</div><div class="abs" style="left:948px;top:292px;width:88px;height:21px;background:#e1e1e1;border:1px solid #adadad"></div><div class="t" style="left:970.5px;top:296.6px;font-size:11px;line-height:13px;letter-spacing:-0.35px;">Cancelar</div><div class="abs" style="left:948px;top:329px;width:88px;height:21px;background:#e1e1e1;border:1px solid #adadad"></div><div class="t" style="left:962.4px;top:333.6px;font-size:11px;line-height:13px;letter-spacing:-0.32px;">Paso a paso</div><div class="abs" style="left:948px;top:357px;width:88px;height:21px;background:#e1e1e1;border:1px solid #adadad"></div><div class="t" style="left:969.3px;top:361.6px;font-size:11px;line-height:13px;letter-spacing:-0.25px;">Modificar</div><div class="abs" style="left:948px;top:394px;width:88px;height:21px;background:#cccccc;border:1px solid #bfbfbf;color:#838383"></div><div class="t" style="left:977.6px;top:398.6px;font-size:11px;line-height:13px;letter-spacing:-0.26px;color:#838383">Crear</div><div class="abs" style="left:948px;top:422px;width:87px;height:21px;background:#e1e1e1;border:1px solid #adadad"></div><div class="t" style="left:972.4px;top:426.6px;font-size:11px;line-height:13px;letter-spacing:-0.57px;">Eliminar</div>
<div class="t" style="left:635.4px;top:491.4px;font-size:11px;line-height:13px;letter-spacing:-0.19px">Macros en:</div>
<div class="abs" style="left:693px;top:489px;width:236px;height:21px;background:#e1e1e1;border:1px solid #adadad"></div>
<div class="t" style="left:696.8px;top:493.6px;font-size:11px;line-height:13px;letter-spacing:-0.12px">VBAProject (Pruebas cortes.xlsx)</div>
<svg class="abs" style="left:915px;top:496px" width="11" height="8"><path d="M1.2 1.6 L5.3 5.8 L9.4 1.6" fill="none" stroke="#3a3a3a" stroke-width="1.3"/></svg>
<!--DIALOG-->
</body></html>
